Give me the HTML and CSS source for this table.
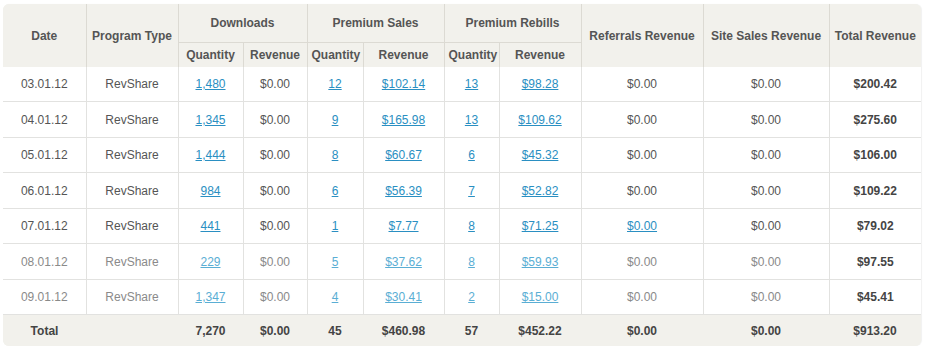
FILE: index.html
```html
<!DOCTYPE html>
<html lang="en">
<head>
    <meta charset="UTF-8">
    <meta name="viewport" content="width=device-width, initial-scale=1.0">
    <title>Revenue Report</title>
    <link rel="stylesheet" href="styles.css">
</head>
<body>
    <!-- Stats Table -->
    <div class="report">
        <table class="stats">
            <colgroup>
                <col style="width: 83px">
                <col style="width: 92px">
                <col style="width: 65px">
                <col style="width: 64px">
                <col style="width: 56px">
                <col style="width: 81px">
                <col style="width: 55px">
                <col style="width: 82px">
                <col style="width: 122px">
                <col style="width: 126px">
                <col style="width: 92px">
            </colgroup>
            <thead>
                <tr class="group-row">
                    <th rowspan="2">Date</th>
                    <th rowspan="2">Program Type</th>
                    <th colspan="2" class="group">Downloads</th>
                    <th colspan="2" class="group">Premium Sales</th>
                    <th colspan="2" class="group">Premium Rebills</th>
                    <th rowspan="2">Referrals Revenue</th>
                    <th rowspan="2">Site Sales Revenue</th>
                    <th rowspan="2" class="last">Total Revenue</th>
                </tr>
                <tr class="sub-row">
                    <th>Quantity</th>
                    <th>Revenue</th>
                    <th>Quantity</th>
                    <th>Revenue</th>
                    <th>Quantity</th>
                    <th>Revenue</th>
                </tr>
            </thead>
            <tbody>
                <tr>
                    <td>03.01.12</td>
                    <td>RevShare</td>
                    <td><a href="#">1,480</a></td>
                    <td>$0.00</td>
                    <td><a href="#">12</a></td>
                    <td><a href="#">$102.14</a></td>
                    <td><a href="#">13</a></td>
                    <td><a href="#">$98.28</a></td>
                    <td>$0.00</td>
                    <td>$0.00</td>
                    <td class="total">$200.42</td>
                </tr>
                <tr>
                    <td>04.01.12</td>
                    <td>RevShare</td>
                    <td><a href="#">1,345</a></td>
                    <td>$0.00</td>
                    <td><a href="#">9</a></td>
                    <td><a href="#">$165.98</a></td>
                    <td><a href="#">13</a></td>
                    <td><a href="#">$109.62</a></td>
                    <td>$0.00</td>
                    <td>$0.00</td>
                    <td class="total">$275.60</td>
                </tr>
                <tr>
                    <td>05.01.12</td>
                    <td>RevShare</td>
                    <td><a href="#">1,444</a></td>
                    <td>$0.00</td>
                    <td><a href="#">8</a></td>
                    <td><a href="#">$60.67</a></td>
                    <td><a href="#">6</a></td>
                    <td><a href="#">$45.32</a></td>
                    <td>$0.00</td>
                    <td>$0.00</td>
                    <td class="total">$106.00</td>
                </tr>
                <tr>
                    <td>06.01.12</td>
                    <td>RevShare</td>
                    <td><a href="#">984</a></td>
                    <td>$0.00</td>
                    <td><a href="#">6</a></td>
                    <td><a href="#">$56.39</a></td>
                    <td><a href="#">7</a></td>
                    <td><a href="#">$52.82</a></td>
                    <td>$0.00</td>
                    <td>$0.00</td>
                    <td class="total">$109.22</td>
                </tr>
                <tr>
                    <td>07.01.12</td>
                    <td>RevShare</td>
                    <td><a href="#">441</a></td>
                    <td>$0.00</td>
                    <td><a href="#">1</a></td>
                    <td><a href="#">$7.77</a></td>
                    <td><a href="#">8</a></td>
                    <td><a href="#">$71.25</a></td>
                    <td><a href="#">$0.00</a></td>
                    <td>$0.00</td>
                    <td class="total">$79.02</td>
                </tr>
                <tr class="faded">
                    <td>08.01.12</td>
                    <td>RevShare</td>
                    <td><a href="#">229</a></td>
                    <td>$0.00</td>
                    <td><a href="#">5</a></td>
                    <td><a href="#">$37.62</a></td>
                    <td><a href="#">8</a></td>
                    <td><a href="#">$59.93</a></td>
                    <td>$0.00</td>
                    <td>$0.00</td>
                    <td class="total">$97.55</td>
                </tr>
                <tr class="faded">
                    <td>09.01.12</td>
                    <td>RevShare</td>
                    <td><a href="#">1,347</a></td>
                    <td>$0.00</td>
                    <td><a href="#">4</a></td>
                    <td><a href="#">$30.41</a></td>
                    <td><a href="#">2</a></td>
                    <td><a href="#">$15.00</a></td>
                    <td>$0.00</td>
                    <td>$0.00</td>
                    <td class="total">$45.41</td>
                </tr>
            </tbody>
            <tfoot>
                <tr>
                    <td>Total</td>
                    <td></td>
                    <td>7,270</td>
                    <td>$0.00</td>
                    <td>45</td>
                    <td>$460.98</td>
                    <td>57</td>
                    <td>$452.22</td>
                    <td>$0.00</td>
                    <td>$0.00</td>
                    <td>$913.20</td>
                </tr>
            </tfoot>
        </table>
    </div>
</body>
</html>
```

FILE: styles.css
```css
/* General Styles */
body {
    font-family: "Liberation Sans", Arial, sans-serif;
    margin: 0;
    padding: 4px 0 0 3px;
    background: #ffffff;
    color: #555;
}

/* Report wrapper keeps the rounded corners */
.report {
    width: 918px;
    border-radius: 6px;
    overflow: hidden;
    background-color: #f2f1ec;
    box-shadow: 1px 0 1px rgba(0, 0, 0, 0.06);
}

.stats {
    width: 918px;
    border-collapse: collapse;
    table-layout: fixed;
    font-size: 12px;
}

.stats th {
    font-weight: bold;
    color: #555;
    background-color: #f2f1ec;
    border-right: 1px solid #dcdad3;
    text-align: center;
    padding: 0 4px;
}

.stats th.last {
    border-right: none;
}

.group-row th {
    height: 38px;
}

.group-row th.group {
    border-bottom: 1px solid #dcdad3;
}

.sub-row th {
    height: 24px;
}

.stats td {
    text-align: center;
    padding: 0 4px;
}

.stats tbody td {
    background-color: #ffffff;
    border-right: 1px solid #e2e2e0;
    border-top: 1px solid #e2e2e0;
    height: 34px;
}

.stats tbody tr:nth-child(even) td {
    height: 35px;
}

.stats tbody tr:first-child td {
    border-top: none;
}

.stats tbody td:last-child {
    border-right: none;
}

.stats tbody td.total {
    font-weight: bold;
    color: #444;
}

.stats a {
    color: #2a8fc2;
    text-decoration: underline;
}

.faded td {
    color: #8a8a8a;
}

.faded a {
    color: #5aaed4;
}

.faded td.total {
    color: #444;
}

/* Totals row */
.stats tfoot td {
    background-color: #f2f1ec;
    border-top: 1px solid #e2e2e0;
    font-weight: bold;
    color: #444;
    height: 31px;
}
```
